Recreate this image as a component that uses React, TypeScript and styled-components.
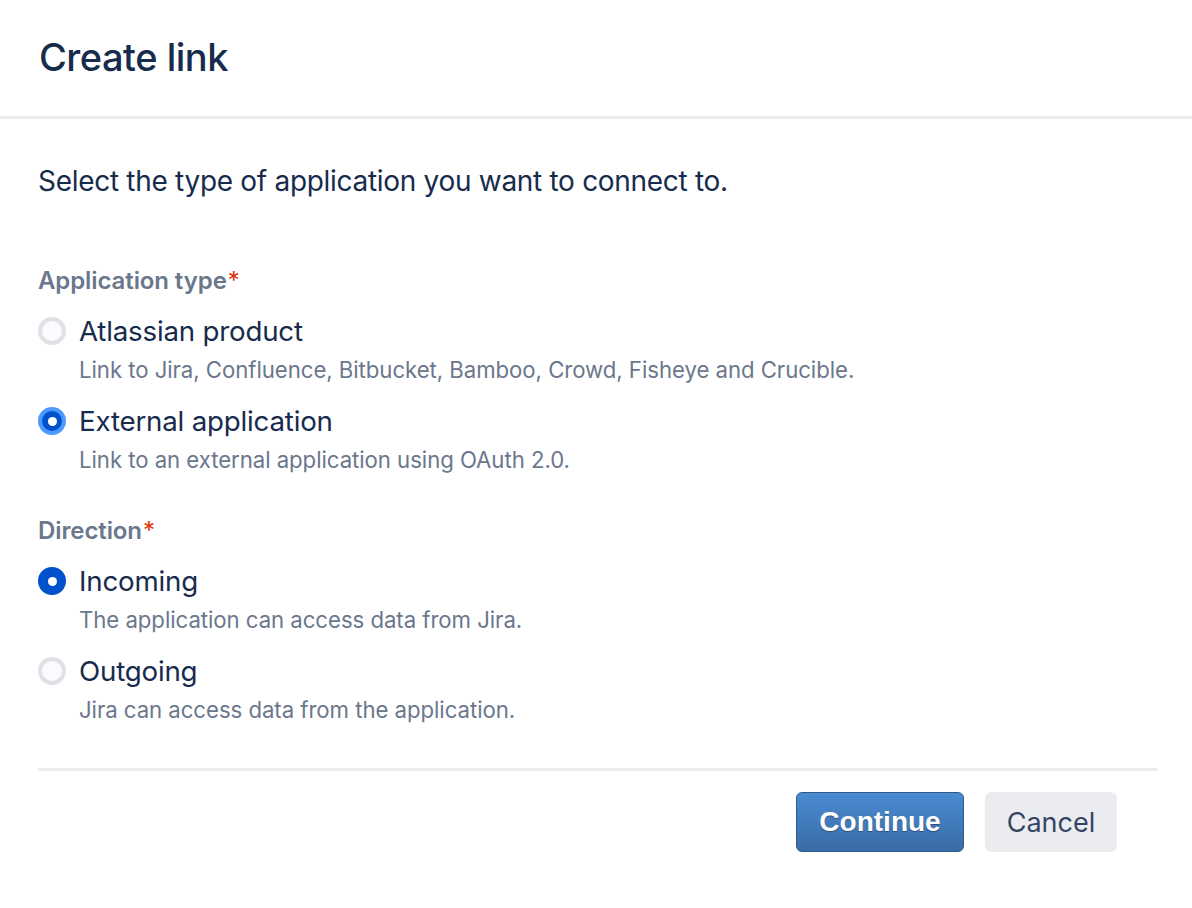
import React, { useState } from "react";
import styled, { createGlobalStyle } from "styled-components";

const Global = createGlobalStyle`
  html, body { margin: 0; padding: 0; background: #ffffff; }
  body { font-family: Inter, "Noto Sans", "Liberation Sans", sans-serif; color: #172b4d; -webkit-font-smoothing: antialiased; }
  * { box-sizing: border-box; }
`;

const Dialog = styled.div`
  width: 1192px;
  height: 908px;
  background: #fff;
  display: flex;
  flex-direction: column;
`;

const Header = styled.header`
  height: 119px;
  display: flex;
  align-items: center;
  padding: 0 39px 3px;
  border-bottom: 3px solid #ebecf0;
`;

const Title = styled.h1`
  margin: 0;
  font-size: 38px;
  font-weight: 500;
  letter-spacing: -0.5px;
  color: #172b4d;
  line-height: 48px;
`;

const Body = styled.div`
  padding: 0 34px 0 38px;
  display: flex;
  flex-direction: column;
`;

const Intro = styled.p`
  margin: 42px 0 0;
  font-size: 28px;
  line-height: 40px;
  letter-spacing: -0.3px;
  color: #172b4d;
`;

const Fieldset = styled.fieldset<{ $first?: boolean }>`
  border: 0;
  padding: 0;
  margin: ${(p) => (p.$first ? "64px" : "39px")} 0 0;
  display: flex;
  flex-direction: column;
`;

const Legend = styled.div`
  font-size: 24px;
  line-height: 32px;
  font-weight: 600;
  color: #6b778c;
  letter-spacing: -0.1px;
`;

const Required = styled.span`
  color: #de350b;
  font-weight: 400;
  margin-left: 1px;
`;

const Option = styled.label<{ $first?: boolean }>`
  display: grid;
  grid-template-columns: 28px 1fr;
  column-gap: 13px;
  margin-top: ${(p) => (p.$first ? "14px" : "15px")};
  cursor: pointer;
`;

const RadioDot = styled.span<{ $checked?: boolean; $focused?: boolean }>`
  width: 28px;
  height: 28px;
  margin-top: 6px;
  border-radius: 50%;
  display: flex;
  align-items: center;
  justify-content: center;
  background: ${(p) => (p.$checked ? "#0052cc" : "#fafbfc")};
  border: 4px solid ${(p) => (p.$checked ? (p.$focused ? "#4c9aff" : "#0052cc") : "#dfe1e6")};
  &::after {
    content: "";
    display: ${(p) => (p.$checked ? "block" : "none")};
    width: 9px;
    height: 9px;
    border-radius: 50%;
    background: #fff;
  }
`;

const OptionLabel = styled.span`
  font-size: 27.7px;
  line-height: 40px;
  color: #172b4d;
  letter-spacing: -0.2px;
`;

const OptionDesc = styled.span`
  grid-column: 2;
  margin-top: 3px;
  font-size: 22.2px;
  line-height: 32px;
  color: #6b778c;
  letter-spacing: -0.05px;
`;

const Footer = styled.div`
  margin-top: 42px;
  border-top: 3px solid #ebecf0;
  padding: 21px 41px 0 0;
  display: flex;
  justify-content: flex-end;
  gap: 21px;
`;

const PrimaryButton = styled.button`
  height: 60px;
  width: 168px;
  border-radius: 6px;
  border: 1px solid #2f5b8c;
  background: linear-gradient(#4a8bd1, #3a6ca6);
  color: #fff;
  font-family: "Liberation Sans", Arial, sans-serif;
  font-size: 28px;
  font-weight: 700;
  text-shadow: 0 1px 1px rgba(0, 0, 0, 0.35);
  cursor: pointer;
`;

const SecondaryButton = styled.button`
  height: 60px;
  width: 132px;
  border-radius: 6px;
  border: 0;
  background: #ebecf0;
  color: #344563;
  font-family: Inter, "Noto Sans", sans-serif;
  font-size: 27px;
  font-weight: 400;
  cursor: pointer;
`;

type Opt = { value: string; label: string; desc: string };

const typeOptions: Opt[] = [
  { value: "atlassian", label: "Atlassian product", desc: "Link to Jira, Confluence, Bitbucket, Bamboo, Crowd, Fisheye and Crucible." },
  { value: "external", label: "External application", desc: "Link to an external application using OAuth 2.0." },
];

const dirOptions: Opt[] = [
  { value: "incoming", label: "Incoming", desc: "The application can access data from Jira." },
  { value: "outgoing", label: "Outgoing", desc: "Jira can access data from the application." },
];

function RadioGroup({
  legend,
  options,
  value,
  focused,
  onChange,
  first,
}: {
  legend: string;
  options: Opt[];
  value: string;
  focused?: boolean;
  onChange: (v: string) => void;
  first?: boolean;
}) {
  return (
    <Fieldset $first={first}>
      <Legend>
        {legend}
        <Required>*</Required>
      </Legend>
      {options.map((o, i) => (
        <Option key={o.value} $first={i === 0} onClick={() => onChange(o.value)}>
          <RadioDot $checked={value === o.value} $focused={focused} />
          <OptionLabel>{o.label}</OptionLabel>
          <OptionDesc>{o.desc}</OptionDesc>
        </Option>
      ))}
    </Fieldset>
  );
}

export default function App() {
  const [type, setType] = useState("external");
  const [dir, setDir] = useState("incoming");
  return (
    <>
      <Global />
      <Dialog>
        <Header>
          <Title>Create link</Title>
        </Header>
        <Body>
          <Intro>Select the type of application you want to connect to.</Intro>
          <RadioGroup first legend="Application type" options={typeOptions} value={type} focused onChange={setType} />
          <RadioGroup legend="Direction" options={dirOptions} value={dir} onChange={setDir} />
          <Footer>
            <PrimaryButton>Continue</PrimaryButton>
            <SecondaryButton>Cancel</SecondaryButton>
          </Footer>
        </Body>
      </Dialog>
    </>
  );
}
